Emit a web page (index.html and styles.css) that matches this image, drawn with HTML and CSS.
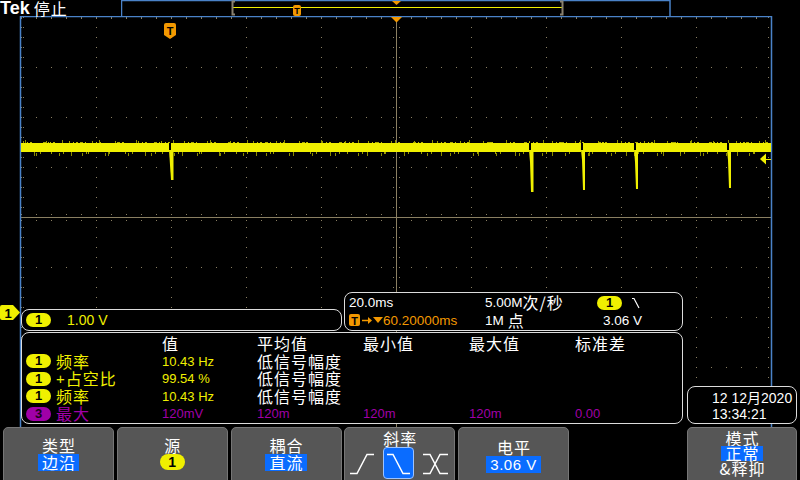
FILE: index.html
```html
<!DOCTYPE html>
<html lang="zh">
<head>
<meta charset="utf-8">
<title>Tek 停止</title>
<link rel="stylesheet" href="styles.css">
</head>
<body>
<div class="screen">
  <header class="topbar">
    <div class="brand"><span class="tek">Tek</span><span class="state">停止</span></div>
    <div class="record">
      <svg width="550" height="16" viewBox="121 0 550 16">
        <rect x="121.5" y="0.5" width="548.5" height="17" fill="none" stroke="#4a82c8" stroke-width="1.5"/>
        <line x1="233" y1="7.5" x2="562" y2="7.5" stroke="#f0f000" stroke-width="1"/>
        <path d="M235,1.5 H232.5 V14.5 H235" fill="none" stroke="#8a8270" stroke-width="2"/>
        <path d="M560,1.5 H562.5 V14.5 H560" fill="none" stroke="#8a8270" stroke-width="2"/>
        <rect x="293" y="5" width="8" height="11" rx="2" fill="#f39800"/>
        <text x="297" y="14" text-anchor="middle" class="tglyph small">T</text>
        <path d="M392,1 H401 L396.5,5 Z" fill="#f39800"/>
      </svg>
    </div>
  </header>

  <main class="main">
    <svg class="scope" width="800" height="411" viewBox="0 16 800 411">
      <defs>
        <pattern id="vdots" x="21" y="17" width="75" height="10" patternUnits="userSpaceOnUse"><rect width="1" height="1" fill="#8a7f62"/></pattern>
        <pattern id="hdots" x="21" y="17" width="15" height="50" patternUnits="userSpaceOnUse"><rect width="1" height="1" fill="#8a7f62"/></pattern>
        <pattern id="edge" x="0" y="17" width="800" height="10" patternUnits="userSpaceOnUse"><rect x="23" width="1" height="1" fill="#8a7f62"/><rect x="768" width="1" height="1" fill="#8a7f62"/></pattern>
        <pattern id="topt" x="21" y="18" width="15" height="2" patternUnits="userSpaceOnUse"><rect width="1" height="1" fill="#8a7f62"/></pattern>
        <pattern id="vtick" x="393" y="17" width="7" height="10" patternUnits="userSpaceOnUse"><rect width="1" height="1" fill="#8a7f62"/><rect x="6" width="1" height="1" fill="#8a7f62"/></pattern>
        <pattern id="htick" x="21" y="214" width="15" height="7" patternUnits="userSpaceOnUse"><rect width="1" height="1" fill="#8a7f62"/><rect y="6" width="1" height="1" fill="#8a7f62"/></pattern>
        <pattern id="noise1" x="21" y="138" width="23" height="22" patternUnits="userSpaceOnUse">
          <rect x="2" y="3" width="1" height="2" fill="#9a9a00"/>
          <rect x="9" y="4" width="2" height="1" fill="#b5b500"/>
          <rect x="15" y="15" width="1" height="3" fill="#8a8a00"/>
          <rect x="6" y="4" width="1" height="2" fill="#c4c400"/>
          <rect x="19" y="14" width="1" height="2" fill="#9a9a00"/>
        </pattern>
        <pattern id="noise2" x="21" y="138" width="37" height="22" patternUnits="userSpaceOnUse">
          <rect x="4" y="2" width="1" height="3" fill="#8f8f00"/>
          <rect x="13" y="14" width="1" height="4" fill="#8a8a00"/>
          <rect x="22" y="4" width="3" height="1" fill="#a8a800"/>
          <rect x="30" y="14" width="1" height="2" fill="#a0a000"/>
          <rect x="27" y="4" width="1" height="2" fill="#c0c000"/>
        </pattern>
      </defs>

      <!-- graticule -->
      <rect x="21" y="17" width="751" height="410" fill="url(#vdots)"/>
      <rect x="21" y="17" width="751" height="410" fill="url(#hdots)"/>
      <rect x="0" y="17" width="800" height="410" fill="url(#edge)"/>
      <rect x="21" y="18" width="751" height="2" fill="url(#topt)"/>
      <line x1="396.5" y1="17" x2="396.5" y2="427" stroke="#8a7f62"/>
      <line x1="21" y1="217.5" x2="771" y2="217.5" stroke="#8a7f62"/>
      <rect x="393" y="17" width="7" height="410" fill="url(#vtick)"/>
      <rect x="21" y="214" width="751" height="7" fill="url(#htick)"/>

      <!-- plot frame -->
      <path d="M20.5,427 V16.5 H771.5 V427" fill="none" stroke="#4a82c8" stroke-width="1.5"/>

      <!-- waveform -->
      <rect x="21" y="138" width="750" height="22" fill="url(#noise1)"/>
      <rect x="21" y="138" width="750" height="22" fill="url(#noise2)"/>
      <rect x="21" y="143" width="750" height="9" fill="#f0f000"/>
      <g fill="#000">
        <rect x="169" y="143" width="2" height="9"/>
        <rect x="529" y="143" width="2" height="9"/>
        <rect x="581" y="143" width="2" height="9"/>
        <rect x="634" y="143" width="2" height="9"/>
        <rect x="727" y="143" width="2" height="9"/>
      </g>
      <g fill="#f0f000">
        <path d="M169,150 L170,165 L171,180 L173.5,180 L173.5,150 Z"/>
        <path d="M529,150 L530,162 L531,192 L533.5,192 L533.5,150 Z"/>
        <path d="M581,150 L582,160 L583,190 L585,190 L585,150 Z"/>
        <path d="M634,150 L635,162 L636,189 L638,189 L638,150 Z"/>
        <path d="M727,150 L728,160 L729,188 L731,188 L731,150 Z"/>
      </g>

      <!-- trigger markers -->
      <path d="M391,17 H402 L396.5,22.5 Z" fill="#f39800"/>
      <path d="M164,25 a2,2 0 0 1 2,-2 h8 a2,2 0 0 1 2,2 v10 l-6,4 l-6,-4 z" fill="#f39800"/>
      <text x="170" y="35" text-anchor="middle" class="tglyph">T</text>
      <path d="M760,159 L766,153.5 V164.5 Z" fill="#f0f000"/>
      <line x1="766" y1="159.5" x2="771" y2="159.5" stroke="#f0f000"/>

      <!-- channel 1 marker -->
      <path d="M0,307 a2,2 0 0 1 2,-2 H13 L20,312.5 L13,320 H2 a2,2 0 0 1 -2,-2 Z" fill="#f0f000"/>
      <text x="8" y="317.5" text-anchor="middle" class="chglyph">1</text>
    </svg>

    <div class="chbox"><span class="pill">1</span><span class="chscale">1.00 V</span></div>

    <div class="hinfo">
      <span>20.0ms</span>
      <span>5.00M<span class="zh">次/秒</span></span>
      <span class="trigsrc"><span class="pill">1</span>
        <svg width="8" height="12" viewBox="0 0 8 12"><path d="M0,1.5 H2 L7,11" fill="none" stroke="#fff" stroke-width="1.2"/></svg>
      </span>
      <span class="orange delay">
        <svg width="34" height="12" viewBox="0 0 34 12">
          <rect x="0" y="0" width="11" height="12" rx="2" fill="#f39800"/>
          <text x="5.5" y="10.5" text-anchor="middle" class="tglyph">T</text>
          <path d="M13,6.5 H20" stroke="#f39800" stroke-width="1.5"/>
          <path d="M19,3 L23,6.5 L19,10 Z" fill="#f39800"/>
          <path d="M24,3 H34 L29,9 Z" fill="#f39800"/>
        </svg>60.20000ms</span>
      <span>1M<span class="zh pt">点</span></span>
      <span class="lvl">3.06 V</span>
    </div>

    <div class="meas">
      <div class="mrow head"><span></span><span class="zh">值</span><span class="zh">平均值</span><span class="zh">最小值</span><span class="zh">最大值</span><span class="zh">标准差</span></div>
      <div class="mrow ylw"><span class="mlabel"><span class="pill">1</span><span class="zh">频率</span></span><span>10.43 Hz</span><span class="zh white">低信号幅度</span><span></span><span></span><span></span></div>
      <div class="mrow ylw"><span class="mlabel"><span class="pill">1</span><span class="plus">+</span><span class="zh">占空比</span></span><span>99.54 %</span><span class="zh white">低信号幅度</span><span></span><span></span><span></span></div>
      <div class="mrow ylw"><span class="mlabel"><span class="pill">1</span><span class="zh">频率</span></span><span>10.43 Hz</span><span class="zh white">低信号幅度</span><span></span><span></span><span></span></div>
      <div class="mrow prp"><span class="mlabel"><span class="pill purple">3</span><span class="zh">最大</span></span><span>120mV</span><span>120m</span><span>120m</span><span>120m</span><span>0.00</span></div>
    </div>

    <div class="datebox">
      <div class="dline">12 12<span class="zh">月</span>2020</div>
      <div class="dline">13:34:21</div>
    </div>
  </main>

  <footer class="menu">
    <div class="btn"><span class="btitle">类型</span><span class="sel zh">边沿</span></div>
    <div class="btn"><span class="btitle">源</span><span class="pill big">1</span></div>
    <div class="btn"><span class="btitle">耦合</span><span class="sel zh">直流</span></div>
    <div class="btn slope"><span class="btitle">斜率</span>
      <span class="icons">
        <svg width="24" height="32" viewBox="0 0 24 32"><path d="M0,26.5 H7 L17,7.5 H24" fill="none" stroke="#fff" stroke-width="1.5"/></svg>
        <span class="selbox"><svg width="29" height="30" viewBox="0 0 29 30"><path d="M3,6.5 H9 L19,25.5 H26" fill="none" stroke="#fff" stroke-width="1.5"/></svg></span>
        <svg width="25" height="32" viewBox="0 0 25 32"><path d="M0,7.5 H7 L17,26.5 H25 M0,26.5 H7 L17,7.5 H25" fill="none" stroke="#fff" stroke-width="1.5"/></svg>
      </span>
    </div>
    <div class="btn level"><span class="btitle">电平</span><span class="sel num">3.06 V</span></div>
    <div class="btn mode"><span class="btitle">模式</span><span class="sel zh">正常</span><span class="btitle">&amp;释抑</span></div>
  </footer>
</div>
</body>
</html>
```

FILE: styles.css
```css
* { box-sizing: border-box; margin: 0; padding: 0; }
html, body { background: #000; }
body {
  width: 800px; height: 480px; overflow: hidden;
  font-family: "Liberation Sans", "Noto Sans CJK SC", sans-serif;
  font-size: 13px; color: #fff;
}
.zh { font-family: "Noto Sans CJK SC", sans-serif; font-size: 16px; letter-spacing: 1px; }

.screen { width: 800px; height: 480px; display: flex; flex-direction: column; overflow: hidden; background: #000; }

/* top bar */
.topbar { height: 16px; flex: none; display: flex; position: relative; z-index: 1; }
.brand { width: 121px; height: 16px; display: flex; align-items: flex-start; }
.tek { font: bold 18px/17px "Liberation Sans", sans-serif; color: #fff; }
.state { font: 16px/16px "Noto Sans CJK SC", sans-serif; letter-spacing: 1px; margin-left: 4px; }
.record { width: 550px; height: 16px; overflow: hidden; }
.record svg, .scope { display: block; }

.tglyph { font: bold 11px "Liberation Sans", sans-serif; fill: #000; }
.tglyph.small { font-size: 9px; }
.chglyph { font: bold 13px "Liberation Sans", sans-serif; fill: #000; }

/* plot area */
.main { position: relative; height: 411px; flex: none; }

.pill {
  display: inline-flex; align-items: center; justify-content: center;
  width: 25px; height: 14px; border-radius: 7px;
  background: #f0f000; color: #000;
  font: bold 13px/14px "Liberation Sans", sans-serif;
}
.pill.purple { background: #a000a8; color: #1c001c; }
.pill.big { width: 25px; height: 16px; border-radius: 8px; font-size: 14px; }

.chbox {
  position: absolute; left: 21px; top: 293px; width: 321px; height: 22px;
  border: 1px solid #dcdcdc; border-radius: 8px; background: #000;
  display: flex; align-items: center; padding-left: 4px; gap: 16px;
}
.chscale { color: #f0f000; font-size: 14px; }

.hinfo {
  position: absolute; left: 344px; top: 276px; width: 339px; height: 39px;
  border: 1px solid #dcdcdc; border-radius: 8px; background: #000;
  display: grid; grid-template-columns: 136px 112px 1fr; grid-auto-rows: 17.5px;
  padding: 1px 0 0 4px; font-size: 13.5px; line-height: 17.5px;
}
.hinfo > span { display: flex; align-items: center; white-space: nowrap; }
.trigsrc { gap: 10px; }
.orange { color: #f39800; }
.pt { margin-left: 4px; }
.lvl { padding-left: 6px; }

.meas {
  position: absolute; left: 21px; top: 316px; width: 662px; height: 92px;
  border: 1px solid #dcdcdc; border-radius: 8px; background: #000;
  padding: 2px 0 0 4px;
}
.mrow {
  display: grid; grid-template-columns: 136px 95px 106px 106px 106px 1fr;
  height: 17.5px; line-height: 17.5px; align-items: center; white-space: nowrap;
}
.mrow > span { display: flex; align-items: center; }
.mlabel { gap: 5px; }
.head { color: #fff; }
.ylw { color: #f0f000; }
.prp { color: #a000a8; }
.white { color: #fff; }
.plus { font-size: 15px; margin-right: -4px; }

.datebox {
  position: absolute; left: 687px; top: 370px; width: 110px; height: 38px;
  border: 1px solid #dcdcdc; border-radius: 8px; background: #000;
  padding: 2px 0 0 24px; font-size: 14px; line-height: 16.5px;
}
.dline { white-space: nowrap; height: 16.5px; }
.datebox .zh { font-size: 14px; letter-spacing: 0; }

/* soft-key menu */
.menu { height: 53px; flex: none; display: flex; gap: 2.75px; padding: 0 3px; }
.btn {
  width: 111px; height: 58px; flex: none;
  background: #565656; border: 1px solid #767676; border-radius: 5px;
  display: flex; flex-direction: column; align-items: center;
  padding-top: 9px; color: #fff;
}
.btn:last-child { margin-left: auto; width: 110px; }
.btitle { font: 16px/17px "Noto Sans CJK SC", sans-serif; letter-spacing: 1px; padding-left: 1px; white-space: nowrap; }
.sel {
  background: #0a6cff; color: #fff; line-height: 17px; height: 17px;
  padding: 0 3px 0 4px;
}
.sel.num { font: 15px/17px "Liberation Sans", sans-serif; padding: 0 4px; letter-spacing: 0.5px; }
.slope { padding-top: 2px; align-items: stretch; }
.slope .btitle { text-align: center; }
.icons { display: flex; align-items: flex-start; gap: 9px; padding-left: 5px; }
.icons svg { display: block; }
.selbox {
  width: 31px; height: 32px; background: #0a6cff;
  border: 1px solid #9cc3ff; border-radius: 4px;
}
.level { padding-top: 11px; }
.mode { padding-top: 3px; }
.mode .btitle, .mode .sel { line-height: 15px; height: 15px; }
```
